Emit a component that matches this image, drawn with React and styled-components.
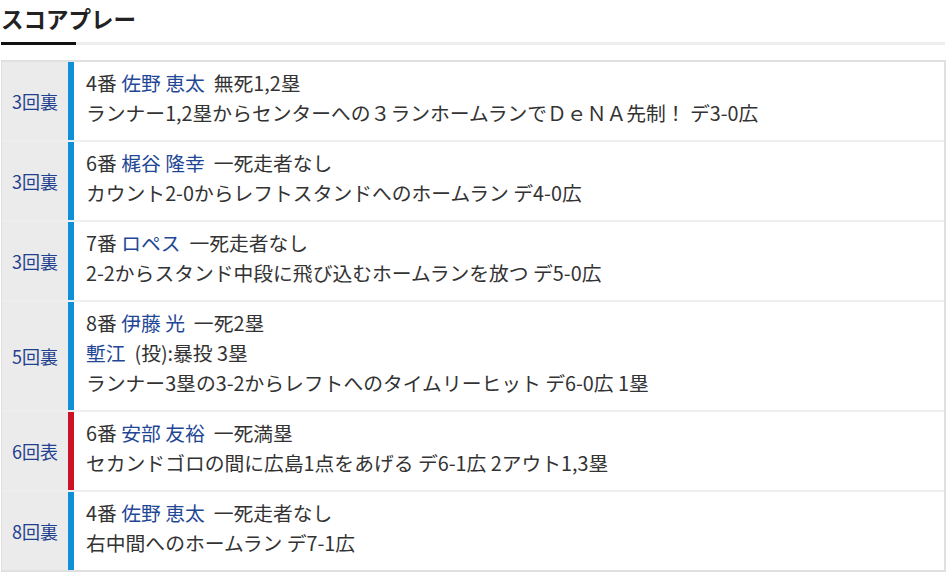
import styled, { createGlobalStyle } from "styled-components";

const GlobalStyle = createGlobalStyle`
  body {
    margin: 0;
    background: #fff;
    font-family: "Noto Sans CJK JP", "Noto Sans", sans-serif;
    color: #333;
  }
`;

const Page = styled.div`
  width: 948px;
  padding: 0 2px 0 1px;
  box-sizing: border-box;
`;

const Heading = styled.h2`
  margin: 0;
  padding-top: 2px;
  font-size: 22.5px;
  line-height: 32px;
  font-weight: 700;
  color: #222;
`;

const Rule = styled.div`
  display: flex;
  height: 3px;
  margin-top: 8px;
  margin-right: 1px;
  background: #eee;
`;

const RuleMark = styled.div`
  width: 75px;
  background: #111;
`;

const Table = styled.div`
  margin-top: 15px;
  border: 2px solid #e0e0e0;
  border-left-width: 1px;
`;

const Row = styled.div`
  display: grid;
  grid-template-columns: 66px 6px 1fr;
  & + & {
    border-top: 2px solid #eee;
  }
`;

const Inning = styled.div`
  display: flex;
  align-items: center;
  justify-content: center;
  background: #ebebeb;
  color: #1f3f8f;
  font-size: 18px;
`;

const Bar = styled.div`
  background: ${(p) => (p.$top ? "#cc1126" : "#0f8fd8")};
`;

const Content = styled.div`
  padding: 6px 12px 12px;
  font-size: 19.8px;
  line-height: 30px;
`;

const Line = styled.div`
  white-space: nowrap;
`;

const Name = styled.span`
  color: #1f4796;
`;

const plays = [
  {
    inning: "3回裏",
    lines: [
      <>4番 <Name>佐野 恵太</Name>&nbsp;&nbsp;無死1,2塁</>,
      "ランナー1,2塁からセンターへの３ランホームランでＤｅＮＡ先制！ デ3-0広",
    ],
  },
  {
    inning: "3回裏",
    lines: [
      <>6番 <Name>梶谷 隆幸</Name>&nbsp;&nbsp;一死走者なし</>,
      "カウント2-0からレフトスタンドへのホームラン デ4-0広",
    ],
  },
  {
    inning: "3回裏",
    lines: [
      <>7番 <Name>ロペス</Name>&nbsp;&nbsp;一死走者なし</>,
      "2-2からスタンド中段に飛び込むホームランを放つ デ5-0広",
    ],
  },
  {
    inning: "5回裏",
    lines: [
      <>8番 <Name>伊藤 光</Name>&nbsp;&nbsp;一死2塁</>,
      <><Name>塹江</Name>&nbsp;&nbsp;(投):暴投 3塁</>,
      "ランナー3塁の3-2からレフトへのタイムリーヒット デ6-0広 1塁",
    ],
  },
  {
    inning: "6回表",
    top: true,
    lines: [
      <>6番 <Name>安部 友裕</Name>&nbsp;&nbsp;一死満塁</>,
      "セカンドゴロの間に広島1点をあげる デ6-1広 2アウト1,3塁",
    ],
  },
  {
    inning: "8回裏",
    lines: [
      <>4番 <Name>佐野 恵太</Name>&nbsp;&nbsp;一死走者なし</>,
      "右中間へのホームラン デ7-1広",
    ],
  },
];

export default function App() {
  return (
    <Page>
      <GlobalStyle />
      <Heading>スコアプレー</Heading>
      <Rule>
        <RuleMark />
      </Rule>
      <Table>
        {plays.map((play, i) => (
          <Row key={i}>
            <Inning>{play.inning}</Inning>
            <Bar $top={play.top} />
            <Content>
              {play.lines.map((line, j) => (
                <Line key={j}>{line}</Line>
              ))}
            </Content>
          </Row>
        ))}
      </Table>
    </Page>
  );
}
